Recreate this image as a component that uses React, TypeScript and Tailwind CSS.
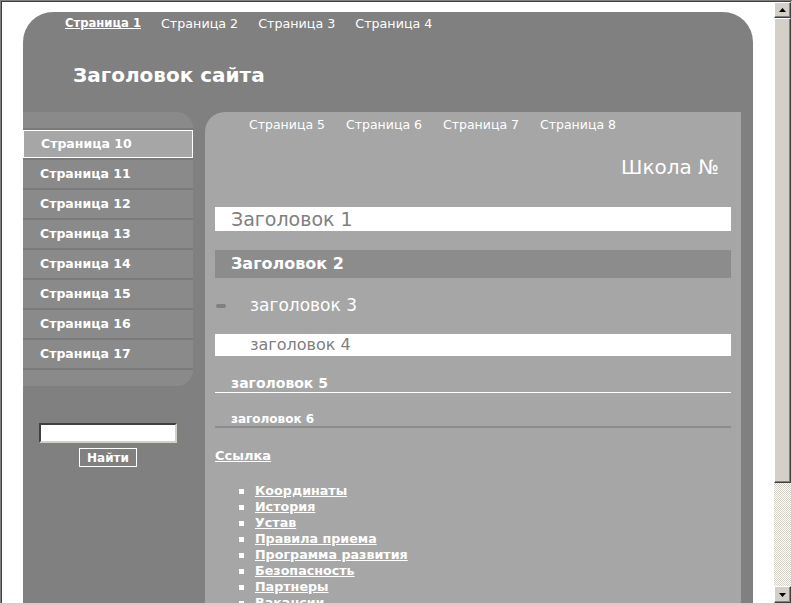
import React from "react";

const topNav = ["Страница 1", "Страница 2", "Страница 3", "Страница 4"];
const subNav = ["Страница 5", "Страница 6", "Страница 7", "Страница 8"];
const sideNav = [
  "Страница 10",
  "Страница 11",
  "Страница 12",
  "Страница 13",
  "Страница 14",
  "Страница 15",
  "Страница 16",
  "Страница 17",
];
const links = [
  "Координаты",
  "История",
  "Устав",
  "Правила приема",
  "Программа развития",
  "Безопасность",
  "Партнеры",
  "Вакансии",
];

function Arrow({ up }: { up?: boolean }) {
  return (
    <svg width="7" height="4" viewBox="0 0 7 4">
      <polygon points={up ? "3.5,0 7,4 0,4" : "0,0 7,0 3.5,4"} fill="#000" />
    </svg>
  );
}

function Scrollbar() {
  return (
    <div className="flex w-[17px] shrink-0 flex-col">
      <div className="flex h-[16px] shrink-0 items-center justify-center border border-t-white border-l-white border-r-[#404040] border-b-[#404040] bg-[#d4d0c8] shadow-[inset_-1px_-1px_0_#808080]">
        <Arrow up />
      </div>
      <div className="h-[465px] shrink-0 border border-t-white border-l-white border-r-[#404040] border-b-[#404040] bg-[#d4d0c8] shadow-[inset_-1px_-1px_0_#808080]" />
      <div className="flex-1 bg-[image:repeating-conic-gradient(#d4d0c8_0%_25%,#ffffff_0%_50%)] bg-[length:2px_2px]" />
      <div className="flex h-[17px] shrink-0 items-center justify-center border border-t-white border-l-white border-r-[#404040] border-b-[#404040] bg-[#d4d0c8] shadow-[inset_-1px_-1px_0_#808080]">
        <Arrow />
      </div>
    </div>
  );
}

function Sidebar() {
  return (
    <div className="w-[170px] shrink-0">
      <div className="overflow-hidden rounded-r-[16px] bg-[#8a8a8a]">
        <div className="h-[16px]" />
        <div className="h-[2px] bg-[#7a7a7a]" />
        {sideNav.map((item, i) => (
          <div key={item}>
            <div
              className={`flex h-[28px] items-center pt-[1px] pl-[17px] text-[12.5px] font-bold text-white ${
                i === 0 ? "border border-white bg-[#a6a6a6] pl-[16px]" : ""
              }`}
            >
              {item}
            </div>
            <div className="h-[2px] bg-[#7a7a7a]" />
          </div>
        ))}
        <div className="h-[16px]" />
      </div>

      <div className="mt-[37px] ml-[16px] flex w-[138px] flex-col items-center">
        <input
          type="text"
          className="h-[20px] w-[138px] border-2 border-t-[#404040] border-l-[#404040] border-r-[#d4d0c8] border-b-[#d4d0c8] bg-white outline-none"
        />
        <button
          type="button"
          className="mt-[5px] h-[19px] w-[58px] border border-white text-[12px] font-bold leading-none text-white"
        >
          Найти
        </button>
      </div>
    </div>
  );
}

function Content() {
  return (
    <div className="w-[536px] shrink-0 rounded-tl-[20px] bg-[#a6a6a6] px-[10px] pb-10 text-white">
      <div className="flex h-[26px] items-center gap-[21px] pl-[34px] text-[12.5px]">
        {subNav.map((item) => (
          <span key={item}>{item}</span>
        ))}
      </div>

      <div className="mt-[17px] pr-[12px] text-right text-[20px] leading-[24px]">Школа №</div>

      <div className="mt-[28px] flex h-[24px] items-center bg-white pl-[16px] text-[19px] text-[#808080]">
        Заголовок 1
      </div>

      <div className="mt-[19px] flex h-[28px] items-center bg-[#8c8c8c] pl-[16px] text-[16px] font-bold">
        Заголовок 2
      </div>

      <div className="mt-[16px] flex h-[24px] items-center">
        <span className="ml-[1px] h-[4px] w-[10px] rounded-full bg-[#808080]" />
        <span className="ml-[24px] text-[17px]">заголовок 3</span>
      </div>

      <div className="mt-[16px] flex h-[22px] items-center bg-white pl-[35px] text-[16px] text-[#808080]">
        заголовок 4
      </div>

      <div className="mt-[18px] flex h-[19px] items-center border-b border-white pl-[16px] text-[14px] font-bold">
        заголовок 5
      </div>

      <div className="mt-[19px] flex h-[16px] items-center border-b-2 border-[#8c8c8c] pl-[16px] text-[12px] font-bold">
        заголовок 6
      </div>

      <div className="mt-[20px] h-[16px] text-[13px] font-bold leading-[16px]">
        <a className="underline">Ссылка</a>
      </div>

      <ul className="mt-[19px] text-[12.7px] font-bold leading-[16px]">
        {links.map((item) => (
          <li key={item} className="flex h-[16px] items-center">
            <span className="ml-[24px] h-[5px] w-[5px] bg-white" />
            <a className="ml-[11px] underline">{item}</a>
          </li>
        ))}
      </ul>
    </div>
  );
}

export default function App() {
  return (
    <div
      className="flex h-[605px] w-[792px] flex-col overflow-hidden bg-white"
      style={{ fontFamily: '"DejaVu Sans", Verdana, sans-serif' }}
    >
      <div className="flex min-h-0 flex-1 border-t border-l border-[#808080]">
        <div className="flex min-h-0 flex-1 border-t border-l border-[#404040]">
          <div className="min-w-0 flex-1 overflow-hidden">
            <div className="mt-[10px] ml-[21px] w-[730px] rounded-t-[30px] bg-[#808080] text-white">
              <div className="h-[100px]">
                <div className="flex h-[24px] items-center gap-[20px] pl-[42px] text-[12.7px]">
                  {topNav.map((item, i) => (
                    <a
                      key={item}
                      className={i === 0 ? "text-[11.6px] font-bold underline" : ""}
                    >
                      {item}
                    </a>
                  ))}
                </div>
                <div className="mt-[27px] pl-[50px] text-[20px] leading-[24px] font-bold">
                  Заголовок сайта
                </div>
              </div>
              <div className="flex gap-[12px] pr-[12px]">
                <Sidebar />
                <Content />
              </div>
            </div>
          </div>
          <Scrollbar />
        </div>
        <div className="w-px bg-[#d4d0c8]" />
      </div>
      <div className="h-[2px] bg-[#d4d0c8]" />
    </div>
  );
}
